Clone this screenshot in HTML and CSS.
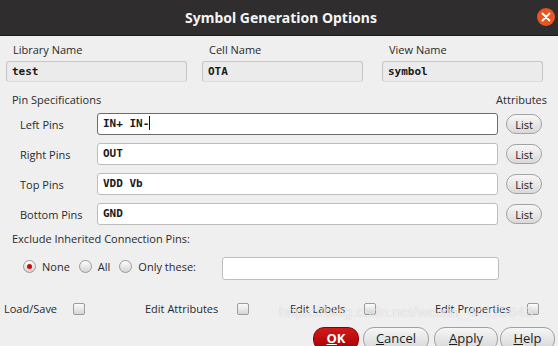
FILE: index.html
```html
<!DOCTYPE html>
<html lang="en">
<head>
  <meta charset="UTF-8">
  <title>Symbol Generation Options</title>
  <link rel="stylesheet" href="styles.css">
</head>
<body>
  <div class="dialog">
    <div class="titlebar">
      <span class="title">Symbol Generation Options</span>
      <span class="close">
        <svg width="10" height="10" viewBox="0 0 10 10">
          <path d="M1.5 1.5 L8.5 8.5 M8.5 1.5 L1.5 8.5" stroke="#fff" stroke-width="1.8" stroke-linecap="round"/>
        </svg>
      </span>
    </div>

    <div class="names">
      <div class="name-col lib">
        <div class="name-label">Library Name</div>
        <div class="name-field">test</div>
      </div>
      <div class="name-col cell">
        <div class="name-label">Cell Name</div>
        <div class="name-field">OTA</div>
      </div>
      <div class="name-col view">
        <div class="name-label">View Name</div>
        <div class="name-field">symbol</div>
      </div>
    </div>

    <div class="pin-head">
      <span>Pin Specifications</span>
      <span>Attributes</span>
    </div>

    <div class="pin-rows">
      <div class="pin-row">
        <span class="pin-label">Left Pins</span>
        <div class="pin-field focused">IN+ IN-<span class="caret"></span></div>
        <button class="list-btn">List</button>
      </div>
      <div class="pin-row">
        <span class="pin-label">Right Pins</span>
        <div class="pin-field">OUT</div>
        <button class="list-btn">List</button>
      </div>
      <div class="pin-row">
        <span class="pin-label">Top Pins</span>
        <div class="pin-field">VDD Vb</div>
        <button class="list-btn">List</button>
      </div>
      <div class="pin-row">
        <span class="pin-label">Bottom Pins</span>
        <div class="pin-field">GND</div>
        <button class="list-btn">List</button>
      </div>
    </div>

    <div class="exclude-label">Exclude Inherited Connection Pins:</div>
    <div class="radio-row">
      <span class="radio checked"></span><span class="radio-text">None</span>
      <span class="radio"></span><span class="radio-text">All</span>
      <span class="radio"></span><span class="radio-text">Only these:</span>
      <div class="pin-field only-field"></div>
    </div>

    <div class="check-row">
      <div class="check-item c1"><span class="check-text">Load/Save</span><span class="checkbox"></span></div>
      <div class="check-item c2"><span class="check-text">Edit Attributes</span><span class="checkbox"></span></div>
      <div class="check-item c3"><span class="check-text">Edit Labels</span><span class="checkbox"></span></div>
      <div class="check-item c4"><span class="check-text">Edit Properties</span><span class="checkbox"></span></div>
    </div>

    <div class="button-row">
      <button class="btn ok"><u>O</u>K</button>
      <button class="btn cancel"><u>C</u>ancel</button>
      <button class="btn apply"><u>A</u>pply</button>
      <button class="btn help"><u>H</u>elp</button>
    </div>

    <div class="watermark">https://blog.csdn.net/weixin_44115643</div>
  </div>
</body>
</html>
```

FILE: styles.css
```css
body {
  margin: 0;
  width: 558px;
  height: 346px;
  overflow: hidden;
  background-color: #efefef;
  font-family: "Open Sans", "Noto Sans", sans-serif;
  font-size: 11px;
  color: #2a2a2a;
}
.dialog {
  position: relative;
  width: 558px;
  height: 346px;
  display: flex;
  flex-direction: column;
}
.titlebar {
  height: 35px;
  flex: none;
  background-color: #2f2d2d;
  border-bottom: 1px solid #1c1b1b;
  display: flex;
  align-items: center;
  justify-content: center;
  position: relative;
}
.title {
  color: #f4f4f4;
  font-family: "Noto Sans", "Open Sans", sans-serif;
  font-weight: bold;
  font-size: 14px;
  margin-left: 4px;
}
.close {
  position: absolute;
  right: 3px;
  top: 8px;
  width: 18px;
  height: 18px;
  border-radius: 50%;
  background-color: #e9541f;
  display: flex;
  align-items: center;
  justify-content: center;
}

/* name fields */
.names {
  display: flex;
  padding: 6px 0 0 6px;
}
.name-col {
  display: flex;
  flex-direction: column;
}
.lib { width: 181px; margin-right: 15px; }
.cell { width: 161px; margin-right: 19px; }
.view { width: 161px; }
.name-label {
  height: 16px;
  line-height: 16px;
  padding-left: 7px;
  margin-bottom: 3px;
}
.name-field {
  height: 19px;
  line-height: 19px;
  border: 1px solid #c6c6c6;
  border-bottom-color: #dcdcdc;
  border-radius: 3px;
  background-color: #ebebeb;
  padding-left: 5px;
  font-family: "DejaVu Sans Mono", monospace;
  font-weight: bold;
  font-size: 11px;
  color: #1a1a1a;
}

/* pins */
.pin-head {
  display: flex;
  justify-content: space-between;
  height: 15px;
  line-height: 15px;
  margin-top: 10px;
  padding: 0 11px 0 12px;
}
.pin-rows {
  display: flex;
  flex-direction: column;
  gap: 8px;
  margin-top: 6px;
}
.pin-row {
  display: flex;
  align-items: center;
  height: 22px;
  padding-left: 20px;
}
.pin-label {
  width: 77px;
}
.pin-field {
  box-sizing: border-box;
  width: 401px;
  height: 22px;
  line-height: 20px;
  border: 1px solid #bdbdbd;
  border-radius: 3px;
  background-color: #fff;
  padding-left: 5px;
  font-family: "DejaVu Sans Mono", monospace;
  font-weight: bold;
  font-size: 11px;
  color: #1a1a1a;
}
.pin-field.focused {
  border-color: #6c6c6c;
}
.caret {
  display: inline-block;
  width: 1px;
  height: 14px;
  background-color: #111;
  vertical-align: -3px;
}
.list-btn {
  margin-left: 8px;
  width: 36px;
  height: 20px;
  padding: 0;
  border: 1px solid #a2a2a2;
  border-radius: 10px;
  background: linear-gradient(#f7f7f7, #d9d9d9);
  font-family: "Open Sans", "Noto Sans", sans-serif;
  font-size: 11px;
  color: #222;
}

/* exclude */
.exclude-label {
  height: 16px;
  line-height: 16px;
  margin-top: 6px;
  padding-left: 12px;
}
.radio-row {
  display: flex;
  align-items: center;
  margin-top: 10px;
  padding-left: 23px;
}
.radio {
  box-sizing: border-box;
  width: 13px;
  height: 13px;
  border-radius: 50%;
  border: 1px solid #9a9a9a;
  background: linear-gradient(#fdfdfd, #d4d4d4);
  margin-top: -4px;
  position: relative;
}
.radio.checked::after {
  content: "";
  position: absolute;
  left: 3px;
  top: 3px;
  width: 5px;
  height: 5px;
  border-radius: 50%;
  background-color: #cc0a0a;
}
.radio-text {
  margin: -4px 9px 0 6px;
}
.only-field {
  width: 277px;
  height: 23px;
  margin-left: 17px;
}

/* checkboxes */
.check-row {
  display: flex;
  margin-top: 21px;
  padding-left: 4px;
  height: 16px;
  align-items: center;
}
.check-item {
  display: flex;
  align-items: center;
}
.c1 { width: 141px; }
.c2 { width: 145px; }
.c3 { width: 145px; }
.c1 .check-text { width: 69px; }
.c2 .check-text { width: 92px; }
.c3 .check-text { width: 74px; }
.c4 .check-text { width: 92px; }
.checkbox {
  box-sizing: border-box;
  width: 12px;
  height: 12px;
  border: 1px solid #9c9c9c;
  border-radius: 2px;
  background: linear-gradient(#fbfbfb, #d6d6d6);
}

/* buttons */
.button-row {
  display: flex;
  margin-top: 11px;
  padding-left: 313px;
}
.btn {
  height: 24px;
  padding: 0 0 2px;
  border: 1px solid #a0a0a0;
  border-radius: 11px;
  background: linear-gradient(#f6f6f6, #d6d6d6);
  font-family: "Open Sans", "Noto Sans", sans-serif;
  font-size: 13px;
  color: #1e1e1e;
}
.btn.ok {
  width: 46px;
  background: linear-gradient(#d01a1a, #a80000);
  border-color: #8a0000;
  color: #fff;
  font-weight: bold;
}
.btn.cancel { width: 66px; margin-left: 4px; }
.btn.apply { width: 64px; margin-left: 5px; }
.btn.help { width: 55px; margin-left: 2px; }

.watermark {
  position: absolute;
  left: 279px;
  top: 303px;
  font-family: "Liberation Sans", sans-serif;
  font-size: 15px;
  color: rgba(255, 255, 255, 0.7);
  text-shadow: 0 0 1px rgba(0, 0, 0, 0.2);
  pointer-events: none;
}
```
